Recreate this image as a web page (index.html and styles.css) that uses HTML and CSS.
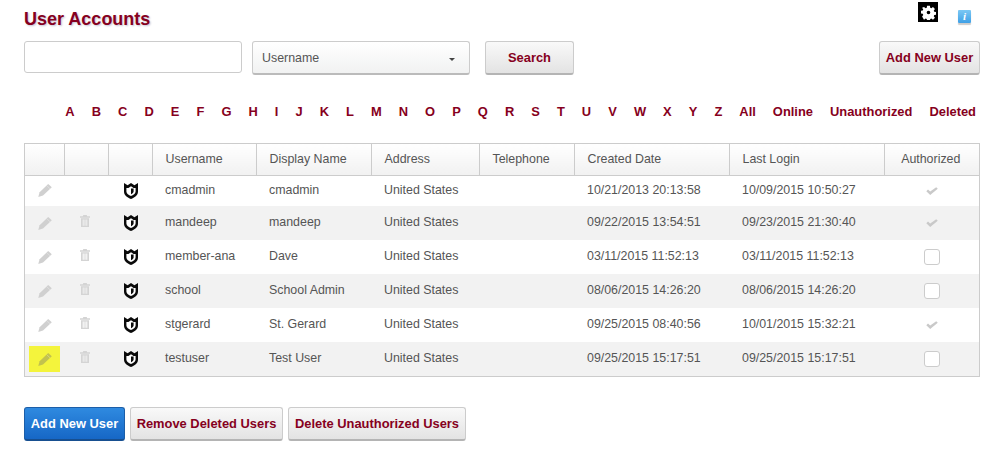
FILE: index.html
```html
<!DOCTYPE html>
<html lang="en">
<head>
<meta charset="utf-8">
<title>User Accounts</title>
<link rel="stylesheet" href="styles.css">
</head>
<body>
<svg class="defs" width="0" height="0" aria-hidden="true">
  <symbol id="pencil" viewBox="0 0 14 13">
    <path d="M10.200 0 13.800 3.200 5 11.400 .3 13l1.300-4.800z" fill="currentColor"/>
    <path d="M8.800 1.800 12 4.800" stroke="#fff" stroke-opacity=".4" fill="none" stroke-width=".7"/>
  </symbol>
  <symbol id="trash" viewBox="0 0 10 12">
    <path d="M3.300 0h3.400l.5 1.200H10v1.500H0V1.200h2.800zM1 3.300h8V12H1zM2.700 4.500v6.200h1v-6.200zM4.500 4.500v6.200h1v-6.200zM6.300 4.500v6.200h1v-6.200z" fill="currentColor" fill-rule="evenodd"/>
  </symbol>
  <symbol id="shield" viewBox="0 0 14 16">
    <path d="M0 0 3.600 2.200 7 0l3.400 2.200L14 0v8.500C14 12.500 10.500 14.500 7 16 3.500 14.500 0 12.500 0 8.500z" fill="#0a0a0a"/>
    <path d="M2.400 5h2L7 3.300 9.600 5h2v3.500c0 2.200-2.400 3.600-4.600 4.600-2.200-1-4.600-2.400-4.600-4.600z" fill="#fff"/>
    <path d="M7 5.400h2.600v3c0 1.200-1.300 2.100-2.600 2.800z" fill="#0a0a0a"/>
  </symbol>
  <symbol id="check" viewBox="0 0 12 8">
    <path d="M.3 4.200 2 2.600l2.200 2L10.200.2 11.800 1.700 4.200 8z" fill="currentColor"/>
  </symbol>
</svg>

<main class="page">
  <header class="title-row">
    <h1 class="title">User Accounts</h1>
    <div class="tools">
      <span class="gear">
        <svg width="15" height="15" viewBox="-1 -1 18 18"><path fill="#fff" fill-rule="evenodd" d="M6.300 0h3.400l.4 2.300 1.300.6 2-1.400 2.300 2.300-1.400 2 .6 1.300 2.100.4v3.200l-2.100.4-.6 1.300 1.400 2-2.300 2.300-2-1.400-1.300.6-.4 2.100H6.300l-.4-2.100-1.300-.6-2 1.400L.3 12.900l1.400-2-.6-1.300L-1 9.200V6l2.100-.4.600-1.300-1.400-2L2.600 1.500l2 1.400 1.300-.6zM8 5.800a2.200 2.200 0 1 0 0 4.400 2.200 2.200 0 0 0 0-4.400z"/></svg>
      </span>
      <span class="info">i</span>
    </div>
  </header>

  <form class="search-row">
    <input class="search-input" type="text" aria-label="Search">
    <div class="select"><span>Username</span><i class="caret"></i></div>
    <button type="button" class="btn btn-search">Search</button>
    <button type="button" class="btn btn-add-top">Add New User</button>
  </form>

  <nav class="alpha">
    <a>A</a><a>B</a><a>C</a><a>D</a><a>E</a><a>F</a><a>G</a><a>H</a><a>I</a><a>J</a><a>K</a><a>L</a><a>M</a><a>N</a><a>O</a><a>P</a><a>Q</a><a>R</a><a>S</a><a>T</a><a>U</a><a>V</a><a>W</a><a>X</a><a>Y</a><a>Z</a><a>All</a><a class="alpha-word">Online</a><a>Unauthorized</a><a>Deleted</a>
  </nav>

  <div class="grid-wrap">
    <table class="grid">
      <colgroup>
        <col class="c1"><col class="c2"><col class="c3"><col class="c4"><col class="c5"><col class="c6"><col class="c7"><col class="c8"><col class="c9"><col class="c10">
      </colgroup>
      <thead>
        <tr><th></th><th></th><th></th><th>Username</th><th>Display Name</th><th>Address</th><th>Telephone</th><th>Created Date</th><th>Last Login</th><th class="center">Authorized</th></tr>
      </thead>
      <tbody>
        <tr class="first">
          <td class="ic"><svg class="i-pencil"><use href="#pencil"/></svg></td><td class="ic-top"></td><td class="ic"><svg class="i-shield"><use href="#shield"/></svg></td>
          <td>cmadmin</td><td>cmadmin</td><td>United States</td><td></td><td>10/21/2013 20:13:58</td><td>10/09/2015 10:50:27</td>
          <td class="ic"><svg class="i-check"><use href="#check"/></svg></td>
        </tr>
        <tr>
          <td class="ic"><svg class="i-pencil"><use href="#pencil"/></svg></td><td class="ic-top"><svg class="i-trash"><use href="#trash"/></svg></td><td class="ic"><svg class="i-shield"><use href="#shield"/></svg></td>
          <td>mandeep</td><td>mandeep</td><td>United States</td><td></td><td>09/22/2015 13:54:51</td><td>09/23/2015 21:30:40</td>
          <td class="ic"><svg class="i-check"><use href="#check"/></svg></td>
        </tr>
        <tr>
          <td class="ic"><svg class="i-pencil"><use href="#pencil"/></svg></td><td class="ic-top"><svg class="i-trash"><use href="#trash"/></svg></td><td class="ic"><svg class="i-shield"><use href="#shield"/></svg></td>
          <td>member-ana</td><td>Dave</td><td>United States</td><td></td><td>03/11/2015 11:52:13</td><td>03/11/2015 11:52:13</td>
          <td class="ic"><span class="box"></span></td>
        </tr>
        <tr>
          <td class="ic"><svg class="i-pencil"><use href="#pencil"/></svg></td><td class="ic-top"><svg class="i-trash"><use href="#trash"/></svg></td><td class="ic"><svg class="i-shield"><use href="#shield"/></svg></td>
          <td>school</td><td>School Admin</td><td>United States</td><td></td><td>08/06/2015 14:26:20</td><td>08/06/2015 14:26:20</td>
          <td class="ic"><span class="box"></span></td>
        </tr>
        <tr>
          <td class="ic"><svg class="i-pencil"><use href="#pencil"/></svg></td><td class="ic-top"><svg class="i-trash"><use href="#trash"/></svg></td><td class="ic"><svg class="i-shield"><use href="#shield"/></svg></td>
          <td>stgerard</td><td>St. Gerard</td><td>United States</td><td></td><td>09/25/2015 08:40:56</td><td>10/01/2015 15:32:21</td>
          <td class="ic"><svg class="i-check"><use href="#check"/></svg></td>
        </tr>
        <tr>
          <td class="ic"><span class="mark"><svg class="i-pencil"><use href="#pencil"/></svg></span></td><td class="ic-top"><svg class="i-trash"><use href="#trash"/></svg></td><td class="ic"><svg class="i-shield"><use href="#shield"/></svg></td>
          <td>testuser</td><td>Test User</td><td>United States</td><td></td><td>09/25/2015 15:17:51</td><td>09/25/2015 15:17:51</td>
          <td class="ic"><span class="box"></span></td>
        </tr>
      </tbody>
    </table>
  </div>

  <div class="actions">
    <button type="button" class="btn btn-primary">Add New User</button>
    <button type="button" class="btn btn-remove">Remove Deleted Users</button>
    <button type="button" class="btn btn-delete">Delete Unauthorized Users</button>
  </div>
</main>
</body>
</html>
```
FILE: styles.css
```css
* { box-sizing: border-box; }
html, body { margin: 0; padding: 0; background: #fff; }
body {
  font-family: "Liberation Sans", Arial, sans-serif;
  font-size: 12.4px;
  color: #555;
  overflow: hidden;
}
.defs { position: absolute; }
.page { width: 1004px; padding: 0 24px; }

.title-row { display: flex; justify-content: space-between; height: 41px; }
.title {
  margin: 0;
  padding-top: 9px;
  font-size: 18px;
  line-height: 20px;
  font-weight: bold;
  color: #860020;
  text-shadow: 1px 1px 2px #c3c3d3;
}
.tools { display: flex; align-items: flex-start; gap: 20px; padding-right: 9px; }
.gear {
  display: flex; align-items: center; justify-content: center;
  width: 20px; height: 20px; margin-top: 2px;
  background: #000;
}
.info {
  width: 13px; height: 13px; margin-top: 10px;
  border-radius: 1px;
  background: linear-gradient(#7cc8f4, #3fa0e6);
  box-shadow: 0 2px 1px #ccc;
  color: #fff;
  font: italic bold 11px/13px "Liberation Serif", serif;
  text-align: center;
}

.search-row { display: flex; align-items: flex-start; height: 34px; }
.search-input {
  width: 218px; height: 32px;
  margin: 0 10px 0 0;
  border: 1px solid #ccc;
  border-radius: 3px;
  background: #fff;
}
.select {
  display: flex; align-items: center; justify-content: space-between;
  width: 218px; height: 34px;
  margin-right: 15px;
  padding: 1px 14px 0 9px;
  border: 1px solid #ccc;
  border-bottom: 2px solid #bbb;
  border-radius: 3px;
  background: linear-gradient(#fff, #f1f2f2);
  font-size: 12.4px;
  color: #555;
}
.caret {
  width: 0; height: 0; margin-top: 2px;
  border-left: 3.5px solid transparent;
  border-right: 3.5px solid transparent;
  border-top: 3.5px solid #444;
}

.btn {
  height: 34px;
  margin: 0;
  padding: 0;
  border: 1px solid #ccc;
  border-bottom: 2px solid #b4b4b4;
  border-radius: 3px;
  background: linear-gradient(#f9f9f9, #e3e3e3);
  font-family: "Liberation Sans", Arial, sans-serif;
  font-size: 12.9px;
  font-weight: bold;
  color: #860020;
}
.btn-search { width: 89px; }
.btn-add-top { width: 101px; margin-left: auto; }

.alpha {
  display: flex; justify-content: flex-end; gap: 17.06px;
  height: 16px;
  margin: 29px 0 23px;
  padding-right: 4px;
  font-size: 12.9px;
  line-height: 16px;
  font-weight: bold;
  color: #860020;
}
.alpha-word { margin-left: 0; }

.grid-wrap { border: 1px solid #ccc; }
.grid { width: 100%; table-layout: fixed; border-collapse: collapse; }
.c1 { width: 39px; } .c2 { width: 44px; } .c3 { width: 44px; }
.c4 { width: 104px; } .c5 { width: 115px; } .c6 { width: 108px; }
.c7 { width: 95px; } .c8 { width: 155px; } .c9 { width: 155px; } .c10 { width: 95px; }
.grid th {
  height: 31px;
  padding: 0 0 0 13px;
  border-right: 1px solid #ccc;
  border-bottom: 1px solid #ccc;
  background: linear-gradient(#fff, #f1f1f1);
  font-weight: normal;
  text-align: left;
  color: #555;
}
.grid th:last-child { border-right: 0; }
.grid th.center { padding: 0 2px 0 0; text-align: center; }
.grid td {
  height: 34px;
  padding: 9px 0 0 13px;
  line-height: 15px;
  vertical-align: top;
  color: #555;
  overflow: hidden;
  white-space: nowrap;
}
.grid .first td { height: 31px; padding-top: 7px; }
.grid tbody tr:nth-child(even) td { background: #f2f2f2; }
.grid td.ic { padding: 0; text-align: center; vertical-align: middle; }
.grid td.ic:nth-child(3) { padding-left: 1px; }
.grid td.ic-top { padding: 9px 2px 0 0; text-align: center; }
.ic svg, .ic-top svg { display: block; margin: 0 auto; }
.i-pencil { width: 14px; height: 13px; color: #d0d0d0; }
.i-trash { width: 10px; height: 12px; color: #d4d4d4; }
.i-shield { width: 14px; height: 16px; }
.i-check { width: 12px; height: 8px; color: #c9c9c9; }
.mark {
  display: flex; align-items: center; justify-content: center;
  width: 31px; height: 26px; margin: 0 auto;
  background: #f4f43c;
}
.mark .i-pencil { color: #c2c24e; }
.box {
  display: block;
  width: 16px; height: 16px; margin: 0 auto;
  border: 1px solid #ccc;
  border-radius: 3px;
  background: #fff;
}

.actions { display: flex; gap: 5px; margin-top: 30px; }
.btn-primary {
  width: 101px;
  border: 1px solid #1c5ea8;
  border-bottom: 2px solid #174f90;
  background: linear-gradient(#2f8ae0, #1667c6);
  color: #fff;
}
.btn-remove { width: 153px; }
.btn-delete { width: 178px; }
```
